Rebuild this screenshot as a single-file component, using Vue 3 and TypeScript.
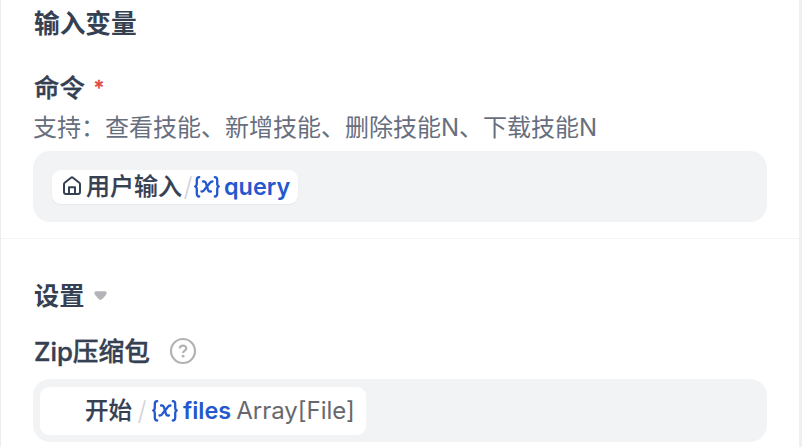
<template>
  <main class="panel">
    <section class="inputs">
      <h2 class="title">输入变量</h2>
      <label class="field-label command">命令<span class="required">*</span></label>
      <p class="description">支持：查看技能、新增技能、删除技能N、下载技能N</p>
      <div class="field">
        <div class="tag">
          <svg class="home" viewBox="0 0 20 20" fill="none" stroke="currentColor" stroke-width="2" stroke-linejoin="round">
            <path d="M2 8.2Q2 7.4 2.7 6.8L9 1.8Q10 1 11 1.8L17.3 6.8Q18 7.4 18 8.2V16Q18 18 16 18H4Q2 18 2 16Z" />
            <path d="M7 18V11.2H13V18" />
          </svg>
          <span class="node">{{ command.node }}</span>
          <span class="slash">/</span>
          <svg class="variable" viewBox="0 0 26 22" fill="none" stroke="currentColor" stroke-width="2.3" stroke-linecap="round" stroke-linejoin="round">
            <path v-for="d in variablePaths" :key="d" :d="d" />
          </svg>
          <span class="name">{{ command.name }}</span>
        </div>
      </div>
    </section>
    <section class="settings">
      <h2 class="title small">设置
        <svg class="arrow" viewBox="0 0 14 10"><path d="M2.5 0H11.5Q14 0 13.5 2.5Q13 4 8.5 8.6Q7 10 5.5 8.6Q1 4 .5 2.5Q0 0 2.5 0Z" fill="#b3b4b8" /></svg>
      </h2>
      <label class="field-label archive">Zip压缩包
        <svg class="help" viewBox="0 0 28 28" fill="none" stroke="#b3b3b5" stroke-width="2.2">
          <circle cx="14" cy="14" r="12" />
          <path d="M10.8 11.6C10.8 7.7 17.3 7.8 17.3 11.3C17.3 13.6 14.1 13.6 14.1 16" />
          <circle cx="14.1" cy="19.2" r="1.4" fill="#b3b3b5" stroke="none" />
        </svg>
      </label>
      <div class="field file-field">
        <div class="tag file-tag">
          <span class="node">{{ file.node }}</span>
          <span class="slash">/</span>
          <svg class="variable" viewBox="0 0 26 22" fill="none" stroke="currentColor" stroke-width="2.3" stroke-linecap="round" stroke-linejoin="round">
            <path v-for="d in variablePaths" :key="d" :d="d" />
          </svg>
          <span class="name">{{ file.name }}</span>
          <span class="type">{{ file.type }}</span>
        </div>
      </div>
    </section>
  </main>
</template>

<script setup lang="ts">
interface Variable {
  node: string
  name: string
  type?: string
}

const command: Variable = { node: '用户输入', name: 'query' }
const file: Variable = { node: '开始', name: 'files', type: 'Array[File]' }

// braces first, then the two strokes of the x
const variablePaths = [
  'M5.2 1.2C3.2 1.2 2.8 2.2 2.8 4.2V7.5Q2.8 10 1.2 10.5Q2.8 11 2.8 13.5V17.5C2.8 19.5 3.2 20.5 5.2 20.5',
  'M20.8 1.2C22.8 1.2 23.2 2.2 23.2 4.2V7.5Q23.2 10 24.8 10.5Q23.2 11 23.2 13.5V17.5C23.2 19.5 22.8 20.5 20.8 20.5',
  'M9 5.5H10Q11.5 5.5 12 7.2L14 13.8Q14.5 15.5 16 15.5H17',
  'M18.5 5.5Q16.8 5.5 15.6 7.2L10.4 13.8Q9.2 15.5 7.5 15.5',
]
</script>

<style>
body { margin: 0; background: #fff; }
</style>

<style scoped>
* { box-sizing: border-box; }
.panel { height: 447px; overflow: hidden; border-left: 1px solid #ededf0; border-right: 3px solid #f0f0f3; background: #fff; color: #354052; font-family: Inter, "Noto Sans CJK SC", sans-serif; }
.inputs { height: 239px; padding: 6px 32px 0; border-bottom: 1px solid #f3f4f5; }
.title { display: flex; align-items: center; height: 36px; margin: 0; padding-left: 1px; font-size: 25.7px; font-weight: 600; line-height: 36px; }
.field-label { display: flex; align-items: center; height: 36px; padding-left: 1px; font-size: 25.4px; font-weight: 500; line-height: 36px; -webkit-text-stroke: .4px currentColor; }
.command { margin-top: 28px; }
.required { margin-left: 9px; color: #e2493e; font-size: 20px; }
.description { height: 36px; margin: 4px 0 5px; color: #676f7e; font-size: 24px; line-height: 36px; white-space: nowrap; }
.field { display: flex; align-items: center; width: 734px; height: 71px; padding-left: 19px; border-radius: 17px; background: #f2f3f5; }
.tag { display: flex; align-items: center; width: 246px; height: 34px; padding-left: 10px; border-radius: 9px; background: #fff; box-shadow: 0 1px 2px #1018280d; white-space: nowrap; font-size: 24px; font-weight: 500; line-height: 34px; }
.home { width: 20px; height: 20px; margin: -2px 4px 0 0; }
.node { -webkit-text-stroke: .2px currentColor; }
.slash { width: 12px; text-align: center; color: #d0d4dc; font-size: 26px; font-weight: 300; }
.variable { width: 26px; height: 22px; flex: none; color: #2458ce; }
.name { margin-left: 4px; color: #2458ce; font-size: 23.4px; font-weight: 600; }
.settings { padding: 39px 32px 0; }
.small { font-size: 25.2px; }
.arrow { width: 13px; height: 10px; margin-left: 10px; }
.archive { margin-top: 20px; font-size: 25.7px; }
.help { width: 28px; height: 28px; margin: -2px 0 0 19px; }
.file-field { height: 63px; margin-top: 9px; padding-left: 7px; }
.file-tag { width: 326px; height: 48px; padding-left: 45px; font-size: 23.5px; box-shadow: none; }
.file-tag .slash { width: 20px; }
.file-tag .name { margin-left: 5px; }
.type { margin-left: 5px; color: #67686d; font-size: 24px; font-weight: 400; }
</style>
